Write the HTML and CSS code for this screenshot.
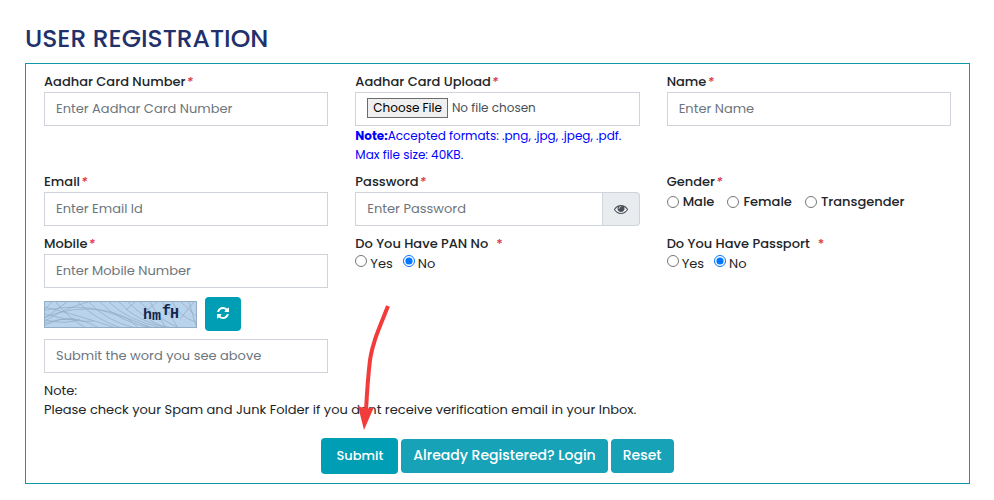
FILE: index.html
```html
<!DOCTYPE html>
<html lang="en">
<head>
  <meta charset="UTF-8">
  <meta name="viewport" content="width=device-width, initial-scale=1.0">
  <title>User Registration</title>
  <link rel="stylesheet" href="styles.css">
</head>
<body>
  <main class="page">
    <h1 class="page-title">USER REGISTRATION</h1>

    <form class="panel">
      <div class="form-grid">
        <div class="field">
          <label class="field-label" for="aadhar">Aadhar Card Number<span class="required">*</span></label>
          <input class="form-control" type="text" id="aadhar" placeholder="Enter Aadhar Card Number">
        </div>

        <div class="field">
          <label class="field-label" for="aadhar-file">Aadhar Card Upload<span class="required">*</span></label>
          <input class="form-control file-control" type="file" id="aadhar-file">
          <p class="file-note"><b>Note:</b>Accepted formats: .png, .jpg, .jpeg, .pdf.<br>Max file size: 40KB.</p>
        </div>

        <div class="field">
          <label class="field-label" for="name">Name<span class="required">*</span></label>
          <input class="form-control" type="text" id="name" placeholder="Enter Name">
        </div>

        <div class="field">
          <label class="field-label" for="email">Email<span class="required">*</span></label>
          <input class="form-control" type="email" id="email" placeholder="Enter Email Id">
        </div>

        <div class="field">
          <label class="field-label" for="password">Password<span class="required">*</span></label>
          <div class="input-group">
            <input class="form-control" type="password" id="password" placeholder="Enter Password">
            <button class="input-addon" type="button" aria-label="Show password">
              <svg width="14" height="14" viewBox="0 0 1792 1792" fill="currentColor"><path d="M1664 960q-152-236-381-353 61 104 61 225 0 185-131.500 316.500t-316.500 131.500-316.500-131.500-131.500-316.500q0-121 61-225-229 117-381 353 133 205 333.500 326.500t434.500 121.500 434.500-121.500 333.500-326.500zm-720-384q0-20-14-34t-34-14q-125 0-214.500 89.500t-89.500 214.500q0 20 14 34t34 14 34-14 14-34q0-86 61-147t147-61q20 0 34-14t14-34zm848 384q0 34-20 69-140 230-376.500 368.500t-499.500 138.500-499.500-139-376.500-368q-20-35-20-69t20-69q140-229 376.500-368t499.500-139 499.500 139 376.500 368q20 35 20 69z"/></svg>
            </button>
          </div>
        </div>

        <fieldset class="field">
          <legend class="field-label">Gender<span class="required">*</span></legend>
          <div class="radio-row gender-row">
            <label><input type="radio" name="gender" value="male">Male</label>
            <label><input type="radio" name="gender" value="female">Female</label>
            <label><input type="radio" name="gender" value="transgender">Transgender</label>
          </div>
        </fieldset>

        <div class="field">
          <label class="field-label" for="mobile">Mobile<span class="required">*</span></label>
          <input class="form-control" type="tel" id="mobile" placeholder="Enter Mobile Number">
        </div>

        <fieldset class="field">
          <legend class="field-label">Do You Have PAN No<span class="required required-wide">*</span></legend>
          <div class="radio-row">
            <label><input type="radio" name="pan" value="yes">Yes</label>
            <label><input type="radio" name="pan" value="no" checked>No</label>
          </div>
        </fieldset>

        <fieldset class="field">
          <legend class="field-label">Do You Have Passport<span class="required required-wide">*</span></legend>
          <div class="radio-row">
            <label><input type="radio" name="passport" value="yes">Yes</label>
            <label><input type="radio" name="passport" value="no" checked>No</label>
          </div>
        </fieldset>

        <div class="field captcha">
          <div class="captcha-row">
            <svg class="captcha-image" width="153" height="27" viewBox="0 0 153 27" role="img" aria-label="Captcha">
              <rect x="0.5" y="0.5" width="152" height="26" fill="#b9d3ec" stroke="#93adc6"/>
              <g fill="none" stroke="#93abc2" stroke-width="0.7">
                <path d="M1 9Q35 3 60 10T108 27M1 16Q30 5 57 9T94 27M1 22Q32 12 55 27M1 6Q40 16 72 27M1 13Q34 22 50 20"/>
                <path d="M12 1Q24 17 42 27M34 1Q51 18 77 27M45 1Q62 20 91 27M56 1Q76 22 109 27M65 1Q83 19 118 27"/>
                <path d="M1 19Q23 24 36 18M1 24Q17 16 32 18M8 1L1 8M23 1L1 17M44 1Q19 8 1 20"/>
                <path d="M75 1Q93 22 128 27M84 1Q101 18 121 27M96 1Q108 14 135 27M106 1L122 27M118 1L134 27M128 1Q137 17 152 21M137 1L152 15M145 1L152 25M113 1L103 9M91 1L82 9M150 1L136 18"/>
              </g>
              <g class="captcha-text">
                <text x="99" y="18">h</text>
                <text x="108" y="19">m</text>
                <text x="118" y="14">f</text>
                <text x="126" y="17">H</text>
              </g>
            </svg>
            <button class="btn btn-refresh" type="button" aria-label="Refresh captcha">
              <svg width="14" height="14" viewBox="0 0 1792 1792" fill="currentColor"><path d="M1639 1056q0 5-1 7-64 268-268 434.500t-478 166.500q-146 0-282.500-55t-243.500-157l-129 129q-19 19-45 19t-45-19-19-45v-448q0-26 19-45t45-19h448q26 0 45 19t19 45-19 45l-137 137q71 66 161 102t187 36q134 0 250-65t186-179q11-17 53-117 8-23 30-23h192q13 0 22.500 9.500t9.500 22.500zm25-800v448q0 26-19 45t-45 19h-448q-26 0-45-19t-19-45 19-45l138-138q-148-137-349-137-134 0-250 65t-186 179q-11 17-53 117-8 23-30 23h-199q-13 0-22.500-9.500t-9.500-22.500v-7q65-268 270-434.500t480-166.500q146 0 284 55.500t245 156.500l130-129q19-19 45-19t45 19 19 45z"/></svg>
            </button>
          </div>
          <input class="form-control" type="text" id="captcha" aria-label="Captcha text" placeholder="Submit the word you see above">
        </div>
      </div>

      <p class="note">Note:<br>Please check your Spam and Junk Folder if you dont receive verification email in your Inbox.</p>

      <div class="actions">
        <div class="submit-wrap">
          <button class="btn btn-submit" type="submit">Submit</button>
          <!-- pointer to the submit button -->
          <svg class="arrow" width="40" height="126" viewBox="0 0 40 126" aria-hidden="true">
            <path d="M34 1C25 24 19 36 16 55C14 72 13 86 12 106" fill="none" stroke="#f23c3c" stroke-width="4"/>
            <path d="M4 101L12 104L20 102L10 125Z" fill="#f23c3c"/>
          </svg>
        </div>
        <button class="btn btn-info" type="button">Already Registered? Login</button>
        <button class="btn btn-info" type="reset">Reset</button>
      </div>
    </form>
  </main>
</body>
</html>
```
FILE: styles.css
```css
* {
  box-sizing: border-box;
}

body {
  margin: 0;
  font-family: Poppins, Inter, sans-serif;
  font-size: 13px;
  line-height: 19px;
  color: #212529;
  background-color: #ffffff;
}

h1, p {
  margin: 0;
}

input, button {
  font: inherit;
}

.page {
  padding: 20px 24px 16px 25px;
}

.page-title {
  margin-bottom: 5px;
  font-size: 25px;
  line-height: 38px;
  font-weight: 500;
  color: #22306b;
}

.panel {
  padding: 8px 18px 9px;
  border: 1px solid #1097a8;
}

.form-grid {
  display: grid;
  grid-template-columns: repeat(3, minmax(0, 1fr));
  gap: 8px 27px;
}

.field {
  min-width: 0;
  margin: 0;
  padding: 0;
  border: none;
}

.field-label {
  display: block;
  padding: 0;
  line-height: 20px;
  font-weight: 500;
}

.required {
  margin-left: 1px;
  font-style: italic;
  color: #dc3545;
}

.required-wide {
  margin-left: 8px;
  font-style: normal;
}

.form-control {
  display: block;
  width: 100%;
  height: 34px;
  padding: 5px 11px;
  border: 1px solid #ced4da;
  border-radius: 0;
  color: #495057;
  background-color: #ffffff;
}

.form-control::placeholder {
  color: #6c757d;
}

.file-control {
  font-size: 12px;
}

.file-control::file-selector-button {
  height: 20px;
  margin-right: 4px;
  padding: 0 5px;
  border: 1px solid #6b6b6b;
  border-radius: 0;
  font: inherit;
  line-height: 18px;
  color: #000000;
  background-color: #efefef;
}

.file-note {
  font-size: 12px;
  color: #0000ff;
}

.input-group {
  display: flex;
}

.input-group .form-control {
  flex: 1;
  min-width: 0;
}

.input-addon {
  display: flex;
  align-items: center;
  justify-content: center;
  width: 37px;
  padding: 0;
  border: 1px solid #ced4da;
  border-left: none;
  border-radius: 0 4px 4px 0;
  color: #495057;
  background-color: #e9ecef;
}

.radio-row {
  display: flex;
  gap: 10px;
}

.radio-row label {
  display: flex;
  align-items: flex-start;
  gap: 3px;
}

.radio-row input {
  width: 12px;
  height: 12px;
  margin: 1px 0 0;
}

.gender-row {
  gap: 13px;
  font-weight: 500;
}

.gender-row label {
  align-items: center;
  gap: 4px;
}

.gender-row input {
  margin: 0;
}

.captcha {
  padding-top: 1px;
}

.captcha-row {
  display: flex;
  align-items: center;
  gap: 8px;
  margin-bottom: 8px;
}

.captcha-text {
  font-family: "Liberation Mono", monospace;
  font-size: 15px;
  font-weight: bold;
  fill: #14264f;
}

.note {
  margin-top: 8px;
}

.actions {
  display: flex;
  justify-content: center;
  align-items: center;
  gap: 3px;
  margin-top: 19px;
}

.btn {
  height: 34px;
  padding: 0 12px 2px;
  border: none;
  border-radius: 4px;
  color: #ffffff;
  cursor: pointer;
}

.btn-refresh {
  display: flex;
  align-items: center;
  justify-content: center;
  width: 36px;
  padding: 0 0 2px;
  background-color: #009eb5;
}

.btn-submit {
  display: block;
  height: 36px;
  padding: 0 15px 2px;
  font-weight: 500;
  background-color: #009eb5;
}

.btn-info {
  font-size: 14px;
  font-weight: 500;
  background-color: #17a2b8;
}

.submit-wrap {
  position: relative;
}

.arrow {
  position: absolute;
  left: 33px;
  bottom: 43px;
  pointer-events: none;
}
```
